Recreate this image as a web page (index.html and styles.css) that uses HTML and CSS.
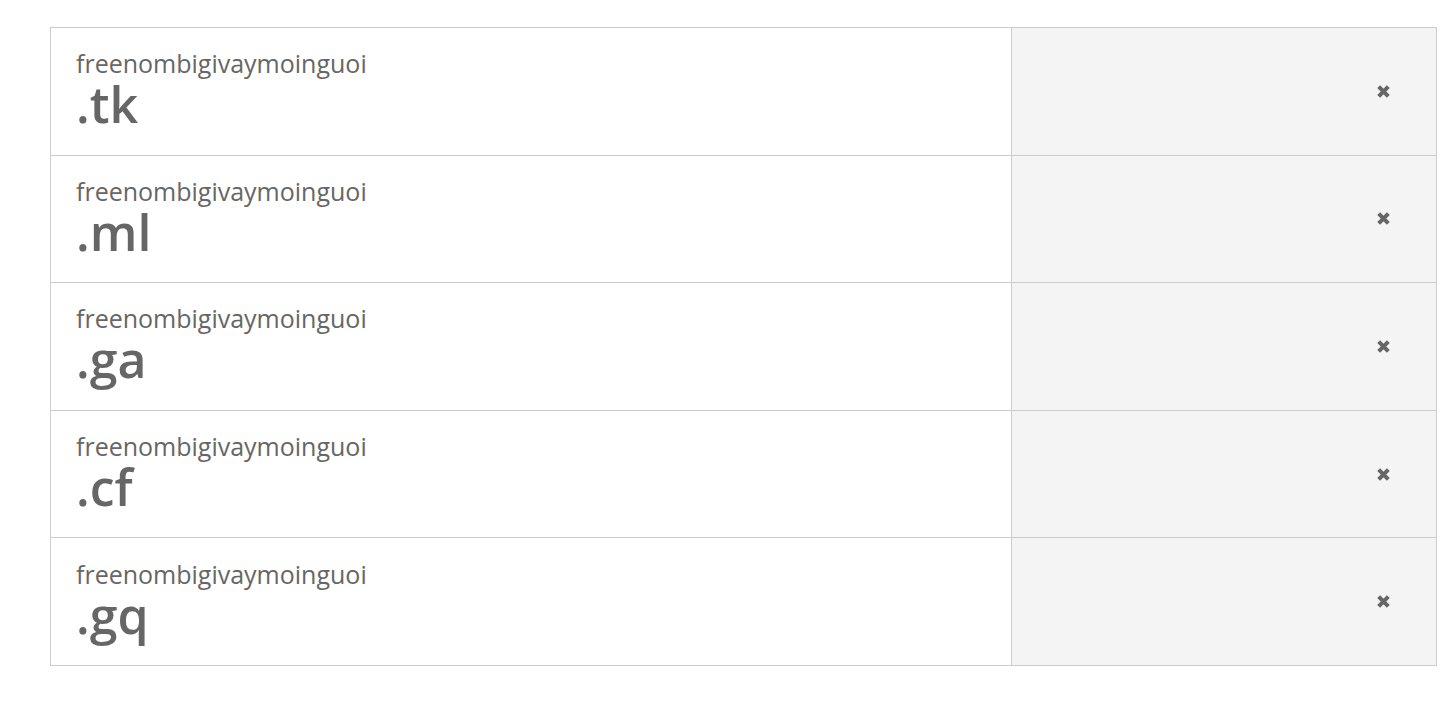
FILE: index.html
```html
<!DOCTYPE html>
<html>
<head>
<meta charset="utf-8">
<link rel="stylesheet" href="styles.css">
</head>
<body>
<div class="list">
  <div class="row">
    <div class="name"><div class="sld">freenombigivaymoinguoi</div><div class="tld">.tk</div></div>
    <div class="action"><svg class="x" viewBox="0 0 14 14"><path d="M2.5 2.5 L11.5 11.5 M11.5 2.5 L2.5 11.5"/></svg></div>
  </div>
  <div class="row">
    <div class="name"><div class="sld">freenombigivaymoinguoi</div><div class="tld">.ml</div></div>
    <div class="action"><svg class="x" viewBox="0 0 14 14"><path d="M2.5 2.5 L11.5 11.5 M11.5 2.5 L2.5 11.5"/></svg></div>
  </div>
  <div class="row">
    <div class="name"><div class="sld">freenombigivaymoinguoi</div><div class="tld">.ga</div></div>
    <div class="action"><svg class="x" viewBox="0 0 14 14"><path d="M2.5 2.5 L11.5 11.5 M11.5 2.5 L2.5 11.5"/></svg></div>
  </div>
  <div class="row">
    <div class="name"><div class="sld">freenombigivaymoinguoi</div><div class="tld">.cf</div></div>
    <div class="action"><svg class="x" viewBox="0 0 14 14"><path d="M2.5 2.5 L11.5 11.5 M11.5 2.5 L2.5 11.5"/></svg></div>
  </div>
  <div class="row">
    <div class="name"><div class="sld">freenombigivaymoinguoi</div><div class="tld">.gq</div></div>
    <div class="action"><svg class="x" viewBox="0 0 14 14"><path d="M2.5 2.5 L11.5 11.5 M11.5 2.5 L2.5 11.5"/></svg></div>
  </div>
</div>
</body>
</html>
```
FILE: styles.css
```css
html, body {
  margin: 0;
  padding: 0;
  background: #fff;
}
body {
  font-family: "Open Sans", "Liberation Sans", sans-serif;
  color: #666;
}
.list {
  margin: 27px 0 0 50px;
  width: 1387px;
  border: 1px solid #ccc;
  border-top: none;
  box-sizing: border-box;
}
.row {
  display: grid;
  grid-template-columns: 960px 1fr;
  height: 127.6px;
  box-sizing: border-box;
  border-top: 1px solid #ccc;
}
.name {
  padding: 18.3px 0 0 25px;
  display: flex;
  flex-direction: column;
}
.sld {
  font-size: 25px;
  line-height: 34px;
}
.tld {
  font-size: 50px;
  line-height: 48.6px;
  font-weight: 600;
}
.action {
  background: #f4f4f4;
  border-left: 1px solid #ccc;
  display: flex;
  align-items: center;
  justify-content: flex-end;
  padding-right: 45px;
}
.x {
  width: 15px;
  height: 15px;
  stroke: #666;
  stroke-width: 3.8;
  fill: none;
}
```
